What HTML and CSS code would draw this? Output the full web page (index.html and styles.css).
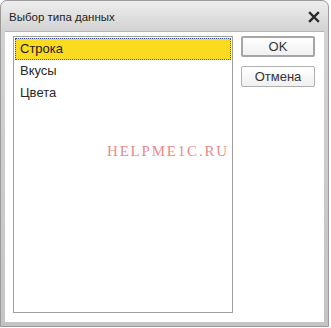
FILE: index.html
```html
<!DOCTYPE html>
<html lang="ru">
  <head>
    <title>Выбор типа данных</title>
    <meta charset="UTF-8">
    <link rel="stylesheet" href="styles.css">
  </head>
  <body>
    <div class="window">
      <div class="window__title">
        <span class="window__caption">Выбор типа данных</span>
        <svg class="window__close" width="12" height="12" viewBox="0 0 12 12">
          <path d="M2 2 L10 10 M10 2 L2 10" stroke="#2a2a2a" stroke-width="2.4" stroke-linecap="square"/>
        </svg>
      </div>
      <div class="window__body">
        <ul class="type-list">
          <li class="type-list__item type-list__item--selected">Строка</li>
          <li class="type-list__item">Вкусы</li>
          <li class="type-list__item">Цвета</li>
        </ul>
        <div class="actions">
          <button class="btn btn--default">OK</button>
          <button class="btn">Отмена</button>
        </div>
        <div class="watermark">HELPME1C.RU</div>
      </div>
    </div>
  </body>
</html>
```

FILE: styles.css
```css
* {
  box-sizing: border-box;
}
html, body {
  margin: 0;
  padding: 0;
  background: #fff;
  font-family: 'Liberation Sans', Arial, sans-serif;
}

.window {
  width: 329px;
  height: 327px;
  display: flex;
  flex-direction: column;
  border: 1px solid #9a9a9a;
  border-radius: 7px 7px 0 0;
  background: linear-gradient(#eeeeee, #d2d2d2 30px, #c4c4c4);
  padding: 0 4px 4px 4px;
}
.window__title {
  height: 30px;
  display: flex;
  align-items: center;
  justify-content: space-between;
  padding: 0 4px 0 4px;
}
.window__caption {
  font-family: 'Liberation Sans', Arial, sans-serif;
  font-size: 11.5px;
  color: #222;
  padding-top: 2px;
}
.window__close {
  margin-top: 1px;
}

.window__body {
  flex: 1;
  position: relative;
  display: flex;
  gap: 8px;
  background: #fff;
  border-top: 1px solid #b8b8b8;
  padding: 4px 9px 9px 8px;
}

.type-list {
  list-style: none;
  margin: 0;
  padding: 1px;
  width: 220px;
  border: 1px solid #a0a0a0;
}
.type-list__item {
  height: 22px;
  line-height: 20px;
  padding-left: 4px;
  font-size: 13px;
  color: #2a2a2a;
  border: 1px dotted transparent;
}
.type-list__item--selected {
  background: #fbdb20;
  border: 1px dotted #3a4f9a;
  color: #1a1a1a;
}

.actions {
  display: flex;
  flex-direction: column;
  gap: 9px;
  width: 74px;
}
.btn {
  height: 21px;
  padding: 0;
  font-family: 'Liberation Sans', Arial, sans-serif;
  font-size: 13px;
  color: #333;
  background: linear-gradient(#ffffff, #f0f0f0);
  border: 1px solid #b0b0b0;
  border-radius: 2px;
}
.btn--default {
  border: 2px solid #a6a6a6;
}

.watermark {
  position: absolute;
  left: 102px;
  top: 111px;
  font-family: 'Liberation Serif', serif;
  font-size: 15px;
  letter-spacing: 1.8px;
  color: #ea8a8a;
}
```
